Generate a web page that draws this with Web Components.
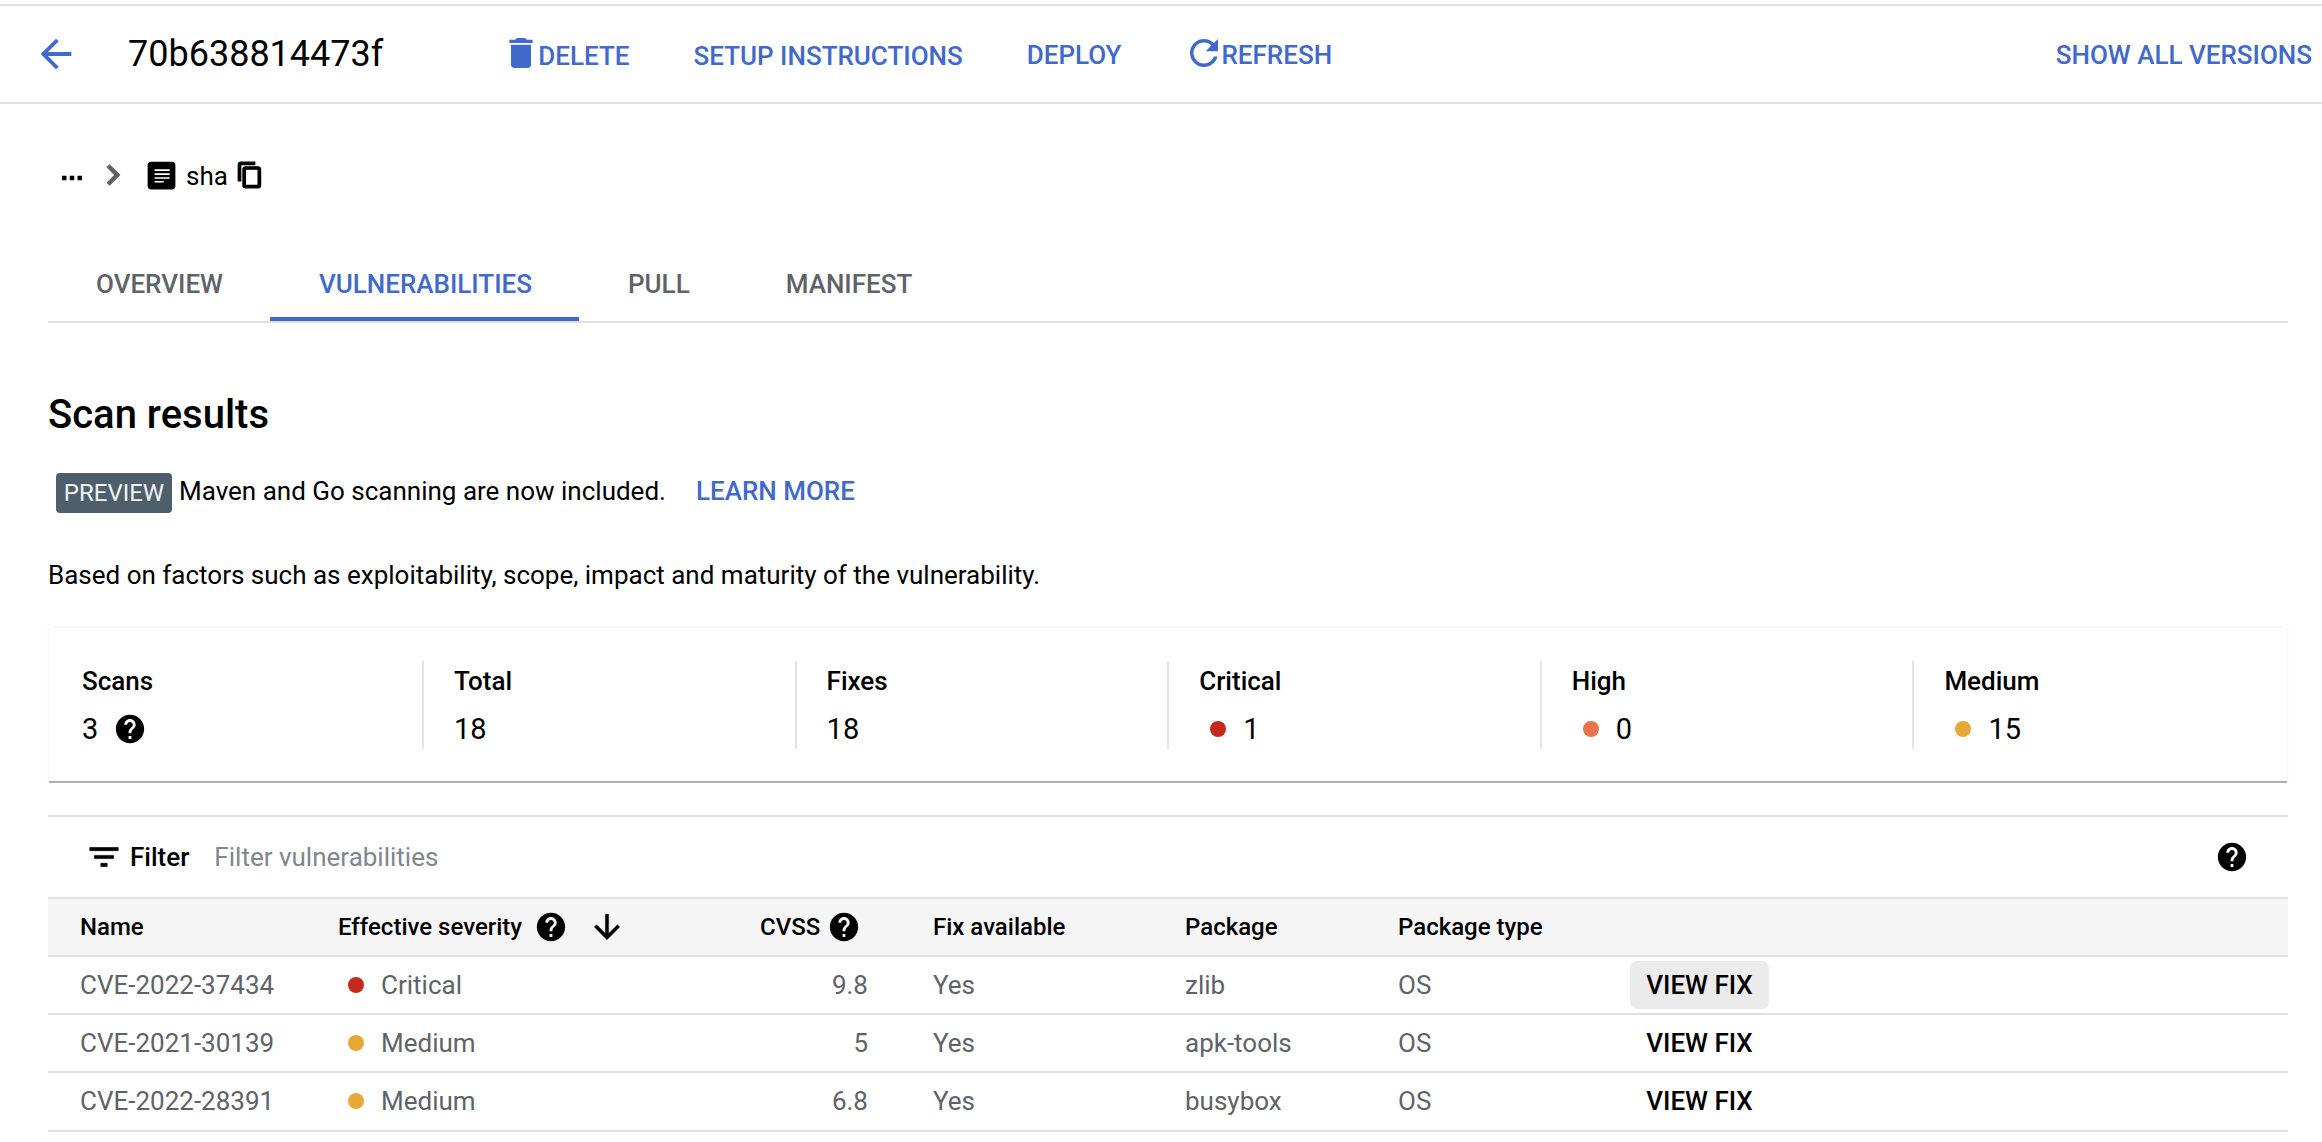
<!doctype html>
<html>
<head>
<meta charset="utf-8">
<title>Scan results</title>
<style>
  html, body { margin: 0; background: #fff; }
  body { font-family: Roboto, "Liberation Sans", sans-serif; color: #000; overflow: hidden; }
</style>
</head>
<body>
<top-bar>
  <ui-icon slot="back" name="back" size="46" style="color:#4169cc"></ui-icon>
  <span slot="title">70b638814473f</span>
  <bar-action icon="delete" icon-size="40" style="margin-left:124px">DELETE</bar-action>
  <bar-action style="margin-left:64px">SETUP INSTRUCTIONS</bar-action>
  <bar-action style="margin-left:64px" nudge>DEPLOY</bar-action>
  <bar-action icon="refresh" icon-size="42" style="margin-left:67px" nudge>REFRESH</bar-action>
  <bar-action slot="end" nudge>SHOW ALL VERSIONS</bar-action>
</top-bar>
<bread-crumbs>sha</bread-crumbs>
<tab-strip>
  <tab-item>OVERVIEW</tab-item>
  <tab-item active>VULNERABILITIES</tab-item>
  <tab-item>PULL</tab-item>
  <tab-item>MANIFEST</tab-item>
</tab-strip>
<scan-intro>
  <span slot="title">Scan results</span>
  <span slot="chip">PREVIEW</span>
  <span slot="notice">Maven and Go scanning are now included.</span>
  <span slot="link">LEARN MORE</span>
  <span slot="about">Based on factors such as exploitability, scope, impact and maturity of the vulnerability.</span>
</scan-intro>
<stat-card>
  <stat-item label="Scans" help>3</stat-item>
  <stat-item label="Total">18</stat-item>
  <stat-item label="Fixes">18</stat-item>
  <stat-item label="Critical" dot="#c5291c">1</stat-item>
  <stat-item label="High" dot="#e8734a">0</stat-item>
  <stat-item label="Medium" dot="#e8a838">15</stat-item>
</stat-card>
<filter-bar></filter-bar>
<vuln-table>
  <vuln-row name="CVE-2022-37434" severity="Critical" cvss="9.8" fix="Yes" pkg="zlib" type="OS" hover></vuln-row>
  <vuln-row name="CVE-2021-30139" severity="Medium" cvss="5" fix="Yes" pkg="apk-tools" type="OS"></vuln-row>
  <vuln-row name="CVE-2022-28391" severity="Medium" cvss="6.8" fix="Yes" pkg="busybox" type="OS"></vuln-row>
</vuln-table>

<script>
const ICONS = {
  back: "M20 11H7.83l5.59-5.59L12 4l-8 8 8 8 1.41-1.41L7.83 13H20v-2z",
  delete: "M6 19c0 1.1.9 2 2 2h8c1.1 0 2-.9 2-2V7H6v12zM19 4h-3.5l-1-1h-5l-1 1H5v2h14V4z",
  refresh: "M17.65 6.35C16.2 4.9 14.21 4 12 4c-4.42 0-7.99 3.58-7.99 8s3.57 8 7.99 8c3.73 0 6.84-2.55 7.73-6h-2.08c-.82 2.33-3.04 4-5.65 4-3.31 0-6-2.69-6-6s2.69-6 6-6c1.66 0 3.14.69 4.22 1.78L13 11h7V4l-2.35 2.35z",
  doc: "M19 3H5c-1.1 0-2 .9-2 2v14c0 1.1.9 2 2 2h14c1.1 0 2-.9 2-2V5c0-1.1-.9-2-2-2zM7.5 8h9.8v1H7.5zM7.5 10.6h9.8v1H7.5zM7.5 13.1h9.8v1H7.5zM7.5 15.6h5.9v1H7.5z",
  copy: "M16 1H4c-1.1 0-2 .9-2 2v14h2V3h12V1zm3 4H8c-1.1 0-2 .9-2 2v14c0 1.1.9 2 2 2h11c1.1 0 2-.9 2-2V7c0-1.1-.9-2-2-2zm0 16H8V7h11v14z",
  chevron: "M10 6L8.59 7.41 13.17 12l-4.58 4.59L10 18l6-6z",
  more: "M4 10.2h3.6v3.6H4zM10.2 10.2h3.6v3.6h-3.6zM16.4 10.2H20v3.6h-3.6z",
  help: "M12 2C6.48 2 2 6.48 2 12s4.48 10 10 10 10-4.48 10-10S17.52 2 12 2zm1 17h-2v-2h2v2zm2.07-7.75l-.9.92C13.45 12.9 13 13.5 13 15h-2v-.5c0-1.1.45-2.1 1.17-2.83l1.24-1.26c.37-.36.59-.86.59-1.41 0-1.1-.9-2-2-2s-2 .9-2 2H8c0-2.21 1.79-4 4-4s4 1.79 4 4c0 .88-.36 1.68-.93 2.25z",
  filter: "M10 18h4v-2h-4v2zM3 6v2h18V6H3zm3 7h12v-2H6v2z",
  down: "M20 12l-1.41-1.41L13 16.17V4h-2v12.17l-5.58-5.59L4 12l8 8 8-8z"
};

const BLUE = "#4169cc";
const GRAY = "#5f6368";

class UiIcon extends HTMLElement {
  connectedCallback () {
    const size = this.getAttribute("size") || 24;
    const weight = this.getAttribute("weight") || 0;
    const path = ICONS[this.getAttribute("name")];
    this.attachShadow({ mode: "open" });
    this.shadowRoot.innerHTML = `
    <style>
      :host { display: inline-flex; flex: none; }
      svg { display: block; fill: currentColor; fill-rule: evenodd; stroke: currentColor; overflow: visible; }
    </style>
    <svg width="${size}" height="${size}" viewBox="0 0 24 24"><path d="${path}" stroke-width="${weight}"></path></svg>
    `;
  }
}

class TopBar extends HTMLElement {
  constructor () {
    super();
    this.attachShadow({ mode: "open" });
    this.shadowRoot.innerHTML = `
    <style>
      :host {
        display: flex;
        align-items: center;
        box-sizing: border-box;
        height: 100px;
        margin-top: 4px;
        border-top: 2px solid #e0e0e0;
        border-bottom: 2px solid #e0e0e0;
        padding: 0 10px 0 33px;
      }
      .back { display: flex; width: 95px; }
      .title { font-size: 36px; line-height: 40px; white-space: nowrap; }
      .end { margin-left: auto; display: flex; }
    </style>
    <div class="back"><slot name="back"></slot></div>
    <div class="title"><slot name="title"></slot></div>
    <slot></slot>
    <div class="end"><slot name="end"></slot></div>
    `;
  }
}

class BarAction extends HTMLElement {
  connectedCallback () {
    const icon = this.getAttribute("icon");
    const size = this.getAttribute("icon-size") || 24;
    const nudge = this.hasAttribute("nudge");
    this.attachShadow({ mode: "open" });
    this.shadowRoot.innerHTML = `
    <style>
      :host {
        display: inline-flex;
        align-items: center;
        color: ${BLUE};
        font-size: 26px;
        font-weight: 500;
        line-height: 32px;
        white-space: nowrap;
      }
      ui-icon { margin: -2px -3px 0 -6px; }
      span { position: relative; top: ${nudge ? 1 : 2}px; }
    </style>
    ${icon ? `<ui-icon name="${icon}" size="${size}"></ui-icon>` : ""}
    <span><slot></slot></span>
    `;
  }
}

class BreadCrumbs extends HTMLElement {
  constructor () {
    super();
    this.attachShadow({ mode: "open" });
    this.shadowRoot.innerHTML = `
    <style>
      :host {
        display: flex;
        align-items: center;
        height: 142px;
        padding-left: 57px;
        font-size: 26px;
      }
      .more { margin-top: 6px; }
      .chevron { color: ${GRAY}; margin-left: 6px; }
      .doc { margin-left: 10px; }
      .label { margin: 2px 8px 0 6px; }
    </style>
    <ui-icon class="more" name="more" size="30"></ui-icon>
    <ui-icon class="chevron" name="chevron" size="40" weight="0.7"></ui-icon>
    <ui-icon class="doc" name="doc" size="37"></ui-icon>
    <span class="label"><slot></slot></span>
    <ui-icon name="copy" size="28" weight="1.2"></ui-icon>
    `;
  }
}

class TabStrip extends HTMLElement {
  constructor () {
    super();
    this.attachShadow({ mode: "open" });
    this.shadowRoot.innerHTML = `
    <style>
      :host {
        display: flex;
        box-sizing: border-box;
        height: 77px;
        margin: 0 34px 0 48px;
        border-bottom: 2px solid #e0e0e0;
      }
    </style>
    <slot></slot>
    `;
  }
}

class TabItem extends HTMLElement {
  constructor () {
    super();
    this.attachShadow({ mode: "open" });
    this.shadowRoot.innerHTML = `
    <style>
      :host {
        display: block;
        box-sizing: border-box;
        height: 75px;
        padding: 0 48px;
        color: ${GRAY};
        font-size: 26px;
        font-weight: 500;
        line-height: 77px;
        white-space: nowrap;
      }
      :host([active]) {
        margin-left: -1px;
        padding: 0 47px 0 49px;
        margin-right: 1px;
        color: ${BLUE};
        border-bottom: 4px solid ${BLUE};
      }
    </style>
    <slot></slot>
    `;
  }
}

class ScanIntro extends HTMLElement {
  constructor () {
    super();
    this.attachShadow({ mode: "open" });
    this.shadowRoot.innerHTML = `
    <style>
      :host { display: block; margin-left: 48px; font-size: 26px; }
      h2 { margin: 72px 0 0; font-size: 40px; font-weight: 500; line-height: 40px; }
      .notice { display: flex; align-items: center; margin: 38px 0 0 8px; height: 40px; }
      .chip {
        box-sizing: border-box;
        width: 116px;
        height: 40px;
        margin-right: 7px;
        border-radius: 4px;
        background: #4e5f6b;
        color: #f0f3f5;
        font-size: 24px;
        line-height: 40px;
        text-align: center;
      }
      .text { position: relative; top: -2px; }
      .link { margin-left: 30px; color: ${BLUE}; font-weight: 500; }
      p { margin: 42px 0 0; line-height: 40px; }
    </style>
    <h2><slot name="title"></slot></h2>
    <div class="notice">
      <span class="chip"><slot name="chip"></slot></span>
      <span class="text"><slot name="notice"></slot></span>
      <span class="text link"><slot name="link"></slot></span>
    </div>
    <p><slot name="about"></slot></p>
    `;
  }
}

class StatCard extends HTMLElement {
  constructor () {
    super();
    this.attachShadow({ mode: "open" });
    this.shadowRoot.innerHTML = `
    <style>
      :host {
        display: grid;
        grid-template-columns: 375px repeat(5, 372.6px);
        box-sizing: border-box;
        height: 153px;
        margin: 33px 35px 0 49px;
        padding-top: 33px;
        background: #fff;
        box-shadow: 0 2px 0 #b0b0b0, 0 0 3px rgba(0, 0, 0, .1);
      }
    </style>
    <slot></slot>
    `;
  }
}

class StatItem extends HTMLElement {
  connectedCallback () {
    const dot = this.getAttribute("dot");
    const help = this.hasAttribute("help");
    this.attachShadow({ mode: "open" });
    this.shadowRoot.innerHTML = `
    <style>
      :host {
        display: block;
        box-sizing: border-box;
        height: 88px;
        padding-left: 30px;
        border-right: 2px solid #e4e4e4;
      }
      :host(:first-child) { padding-left: 33px; }
      :host(:last-child) { border-right: none; }
      .label { font-size: 26px; font-weight: 500; line-height: 40px; }
      .value { display: flex; align-items: center; margin-top: 8px; font-size: 29px; line-height: 40px; }
      .dot { width: 16px; height: 16px; margin: 0 17px 0 11px; border-radius: 50%; }
      ui-icon { margin-left: 15px; }
    </style>
    <div class="label">${this.getAttribute("label")}</div>
    <div class="value">
      ${dot ? `<span class="dot" style="background:${dot}"></span>` : ""}
      <slot></slot>
      ${help ? `<ui-icon name="help" size="34"></ui-icon>` : ""}
    </div>
    `;
  }
}

class FilterBar extends HTMLElement {
  constructor () {
    super();
    this.attachShadow({ mode: "open" });
    this.shadowRoot.innerHTML = `
    <style>
      :host {
        display: flex;
        align-items: center;
        box-sizing: border-box;
        height: 82px;
        margin: 34px 34px 0 48px;
        border-top: 2px solid #e0e0e0;
        padding: 0 39px 0 37px;
        font-size: 26px;
      }
      .label { margin: 0 25px 0 7px; font-weight: 500; }
      .hint { flex: 1; color: #80868b; }
    </style>
    <ui-icon name="filter" size="38" weight="0.4"></ui-icon>
    <span class="label">Filter</span>
    <span class="hint">Filter vulnerabilities</span>
    <ui-icon name="help" size="34"></ui-icon>
    `;
  }
}

const COLUMNS = "290px 422px 173px 252px 213px 232px 1fr";

class VulnTable extends HTMLElement {
  constructor () {
    super();
    this.attachShadow({ mode: "open" });
    this.shadowRoot.innerHTML = `
    <style>
      :host { display: block; margin: 0 34px 0 48px; }
      .head {
        display: grid;
        grid-template-columns: ${COLUMNS};
        align-items: center;
        box-sizing: border-box;
        height: 60px;
        background: #f5f5f5;
        border-top: 2px solid #e0e0e0;
        border-bottom: 2px solid #e0e0e0;
        font-size: 24px;
        font-weight: 500;
      }
      .head > :first-child { padding-left: 32px; }
      .cell { display: flex; align-items: center; }
      .help-a { margin-left: 12px; }
      .arrow { margin-left: 20px; }
      .cvss ui-icon { margin-left: 7px; }
    </style>
    <div class="head">
      <span>Name</span>
      <span class="cell severity">Effective severity
        <ui-icon class="help-a" name="help" size="34"></ui-icon>
        <ui-icon class="arrow" name="down" size="38" weight="0.3"></ui-icon>
      </span>
      <span class="cell cvss">CVSS <ui-icon name="help" size="34"></ui-icon></span>
      <span>Fix available</span>
      <span>Package</span>
      <span>Package type</span>
      <span></span>
    </div>
    <slot></slot>
    `;
  }
}

class VulnRow extends HTMLElement {
  connectedCallback () {
    const attr = (name) => this.getAttribute(name);
    const dotColor = attr("severity") === "Critical" ? "#c5291c" : "#e8a838";
    this.attachShadow({ mode: "open" });
    this.shadowRoot.innerHTML = `
    <style>
      :host {
        display: grid;
        grid-template-columns: ${COLUMNS};
        align-items: center;
        box-sizing: border-box;
        height: 58.2px;
        border-bottom: 2px solid #e0e0e0;
        color: ${GRAY};
        font-size: 26px;
      }
      .name { padding-left: 32px; }
      .severity { display: flex; align-items: center; padding-left: 10px; }
      .dot { width: 16px; height: 16px; margin-right: 17px; border-radius: 50%; }
      .cvss { padding-right: 65px; text-align: right; }
      .fix {
        justify-self: start;
        box-sizing: border-box;
        width: 139px;
        height: 48px;
        border-radius: 7px;
        color: #000;
        font-weight: 500;
        line-height: 48px;
        text-align: center;
      }
      :host([hover]) .fix { background: #ebebeb; }
    </style>
    <span class="name">${attr("name")}</span>
    <span class="severity"><span class="dot" style="background:${dotColor}"></span>${attr("severity")}</span>
    <span class="cvss">${attr("cvss")}</span>
    <span>${attr("fix")}</span>
    <span>${attr("pkg")}</span>
    <span>${attr("type")}</span>
    <span class="fix">VIEW FIX</span>
    `;
  }
}

customElements.define("ui-icon", UiIcon);
customElements.define("top-bar", TopBar);
customElements.define("bar-action", BarAction);
customElements.define("bread-crumbs", BreadCrumbs);
customElements.define("tab-strip", TabStrip);
customElements.define("tab-item", TabItem);
customElements.define("scan-intro", ScanIntro);
customElements.define("stat-card", StatCard);
customElements.define("stat-item", StatItem);
customElements.define("filter-bar", FilterBar);
customElements.define("vuln-table", VulnTable);
customElements.define("vuln-row", VulnRow);
</script>
</body>
</html>
